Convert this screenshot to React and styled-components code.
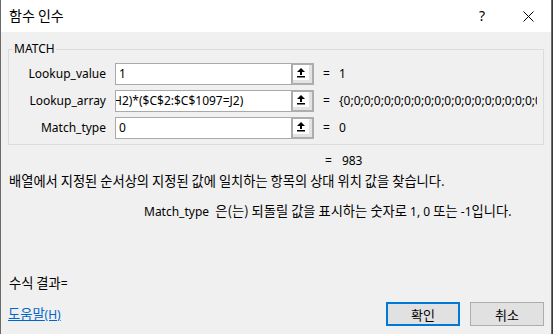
import React from 'react';
import styled, {createGlobalStyle, css} from 'styled-components';

const GlobalStyle = createGlobalStyle`
html, body {
margin: 0;
padding: 0;
background: #3a3a3a;
}
body {
font-family: "Noto Sans", "Noto Sans CJK KR", sans-serif;
font-size: 12px;
color: #000;
}
`;

const Window = styled.div`
width: 552px;
height: 334px;
box-sizing: border-box;
border-left: 1px solid #6a6a6a;
border-right: 1px solid #6a6a6a;
background: #f0f0f0;
display: flex;
flex-direction: column;
font-family: "Noto Sans", "Noto Sans CJK KR", sans-serif;
font-size: 12px;
line-height: 16px;
`;

const TitleBar = styled.div`
height: 32px;
flex-shrink: 0;
background: #fff;
display: flex;
align-items: center;
padding-left: 8px;
`;

const Ko = styled.span`
font-family: "Noto Sans CJK KR", sans-serif;
font-size: ${({size}) => size || 13.25}px;
line-height: 16px;
`;

const Title = styled.div`
flex: 1;
`;

const CaptionButton = styled.div`
width: 46px;
height: 32px;
display: flex;
align-items: center;
justify-content: center;
font-size: 14px;
`;

const Body = styled.div`
flex: 1;
min-width: 0;
display: flex;
flex-direction: column;
padding: 9px 7px 8px 7px;
`;

const Group = styled.fieldset`
margin: 0;
min-width: 0;
padding: 6px 0 5px 0;
border: 1px solid #dcdcdc;
display: flex;
flex-direction: column;
gap: 5px;
`;

const Legend = styled.legend`
padding: 0 1px;
margin-left: 4px;
font-size: 12px;
line-height: 16px;
`;

const Row = styled.div`
display: flex;
align-items: center;
height: 22px;
min-width: 0;
`;

const Label = styled.div`
width: 97px;
flex-shrink: 0;
padding-right: 9px;
text-align: right;
`;

const InputBox = styled.div`
width: 177px;
height: 22px;
flex-shrink: 0;
box-sizing: border-box;
border: 1px solid #a9a9a9;
background: #fff;
padding: 0 3px;
display: flex;
align-items: center;
overflow: hidden;
white-space: nowrap;
`;

const Shifted = styled.span`
margin-left: ${({shift}) => shift || 0}px;
`;

const RefButton = styled.div`
width: 22px;
height: 22px;
flex-shrink: 0;
box-sizing: border-box;
border: 2px solid #adadad;
border-left-width: 1px;
background: #e3e3e3;
padding: 0 3px 3px 0;
display: flex;
`;

const RefInner = styled.div`
flex: 1;
background: #fff;
display: flex;
align-items: center;
justify-content: center;
`;

const Eq = styled.div`
width: 25px;
flex-shrink: 0;
padding-left: 9px;
box-sizing: border-box;
`;

const Value = styled.div`
flex: 1;
min-width: 0;
margin-right: 6px;
overflow: hidden;
white-space: nowrap;
`;

const Result = styled.div`
margin-top: 8px;
padding-left: 317px;
display: flex;
gap: 10px;
`;

const Text = styled.div`
white-space: nowrap;
height: 16px;
${({indent}) => indent && css`
padding-left: ${indent}px;
`}
margin-top: ${({top}) => top || 0}px;
`;

const Bottom = styled.div`
margin-top: auto;
display: flex;
flex-direction: column;
gap: 11px;
`;

const Footer = styled.div`
display: flex;
align-items: center;
gap: 10px;
`;

const HelpLink = styled.a`
flex: 1;
color: #0066cc;
text-decoration: underline;
cursor: pointer;
`;

const Button = styled.button`
width: 74px;
height: 24px;
box-sizing: border-box;
background: #e1e1e1;
border: 1px solid #adadad;
font-family: "Noto Sans CJK KR", sans-serif;
font-size: 13px;
color: #000;
padding: 0;
${({primary}) => primary && css`
border: 2px solid #0078d7;
`}
`;

const ArrowIcon = () => (
    <svg width="10" height="11" viewBox="0 0 10 11">
        <polygon points="5,1 1,5 9,5" fill="#000"/>
        <rect x="4" y="5" width="2" height="3" fill="#000"/>
        <rect x="1" y="9" width="8" height="1.5" fill="#000"/>
    </svg>
);

const CloseIcon = () => (
    <svg width="11" height="11" viewBox="0 0 11 11">
        <path d="M0.5 0.5 L10.5 10.5 M10.5 0.5 L0.5 10.5" stroke="#000" strokeWidth="1" fill="none"/>
    </svg>
);

const rows = [
    {label: 'Lookup_value', input: '1', value: '1'},
    {label: 'Lookup_array', input: 'H2)*($C$2:$C$1097=J2)', shift: -6, value: '{' + Array(40).fill('0').join(';')},
    {label: 'Match_type', input: '0', value: '0'},
];

export default function App() {
    return (
        <>
            <GlobalStyle/>
            <Window>
                <TitleBar>
                    <Title><Ko size={14}>함수 인수</Ko></Title>
                    <CaptionButton>?</CaptionButton>
                    <CaptionButton><CloseIcon/></CaptionButton>
                </TitleBar>
                <Body>
                    <Group>
                        <Legend>MATCH</Legend>
                        {rows.map(r => (
                            <Row key={r.label}>
                                <Label>{r.label}</Label>
                                <InputBox><Shifted shift={r.shift}>{r.input}</Shifted></InputBox>
                                <RefButton><RefInner><ArrowIcon/></RefInner></RefButton>
                                <Eq>=</Eq>
                                <Value>{r.value}</Value>
                            </Row>
                        ))}
                    </Group>
                    <Result><span>=</span><span>983</span></Result>
                    <Text indent={1} top={4}><Ko>배열에서 지정된 순서상의 지정된 값에 일치하는 항목의 상대 위치 값을 찾습니다.</Ko></Text>
                    <Text indent={136} top={14}>
                        Match_type&nbsp;&nbsp;<Ko>은(는) 되돌릴 값을 표시하는</Ko> <Ko>숫자로</Ko> 1, 0 <Ko>또는</Ko> -1<Ko>입니다.</Ko>
                    </Text>
                    <Bottom>
                        <Text indent={1}><Ko>수식 결과</Ko>=</Text>
                        <Footer>
                            <HelpLink><Ko>도움말</Ko>(H)</HelpLink>
                            <Button primary>확인</Button>
                            <Button>취소</Button>
                        </Footer>
                    </Bottom>
                </Body>
            </Window>
        </>
    );
}
